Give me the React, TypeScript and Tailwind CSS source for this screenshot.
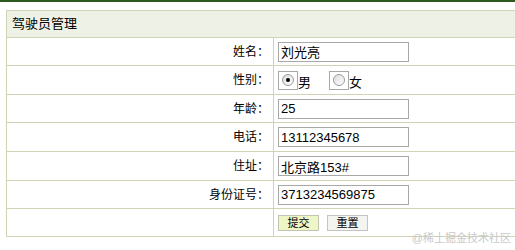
const rows = [
  { label: "姓名：", value: "刘光亮", h: "h-[28px]" },
  { label: "性别：", radio: true, h: "h-[29px]" },
  { label: "年龄：", value: "25", h: "h-[28px]" },
  { label: "电话：", value: "13112345678", h: "h-[29px]" },
  { label: "住址：", value: "北京路153#", h: "h-[29px]" },
  { label: "身份证号：", value: "3713234569875", h: "h-[28px]" },
];

function Radio({ checked, text }: { checked?: boolean; text: string }) {
  return (
    <span className="flex items-end">
      <span className="flex h-[19px] w-[20px] items-center justify-center border border-[#a8a8a8]">
        <span className="flex h-[12px] w-[12px] items-center justify-center rounded-full border border-[#9a9a9a] bg-gradient-to-br from-[#dcdcdc] to-white">
          {checked && <span className="h-[4px] w-[4px] rounded-full bg-black" />}
        </span>
      </span>
      <span className="text-[13px] leading-[14px] text-black">{text}</span>
    </span>
  );
}

export default function App() {
  return (
    <div className="relative h-[250px] w-[515px] overflow-hidden bg-white font-['Liberation_Sans','Noto_Sans_CJK_SC',sans-serif]">
      <div className="h-[2px] bg-[#2c5a1e]" />
      <div className="pl-[6px] pt-[8px]">
        <div className="w-[700px] border-l border-[#d0d3b4]">
          <div className="flex h-[28px] items-center border-y border-[#d0d3b4] bg-[#eef2e6] pl-[5px] text-[13px] text-black">
            驾驶员管理
          </div>
          {rows.map((r) => (
            <div key={r.label} className={`flex ${r.h} border-b border-[#d0d3b4]`}>
              <div className="flex w-[266px] items-center justify-end pr-[4px] text-[12px] text-black">
                {r.label}
              </div>
              <div className="flex flex-1 items-center border-l border-[#d0d3b4] pl-[4px]">
                {r.radio ? (
                  <div className="flex gap-[18px]">
                    <Radio checked text="男" />
                    <Radio text="女" />
                  </div>
                ) : (
                  <input
                    readOnly
                    value={r.value}
                    className="h-[20px] w-[131px] border border-[#a8a8a8] px-[2px] text-[13px] text-black outline-none"
                  />
                )}
              </div>
            </div>
          ))}
          <div className="flex h-[28px] border-b border-[#d0d3b4]">
            <div className="w-[266px]" />
            <div className="flex flex-1 items-center gap-[8px] border-l border-[#d0d3b4] pl-[4px]">
              <button className="h-[16px] w-[41px] border border-[#c4c4b4] bg-[#eef6c6] text-[11px] leading-[14px] text-black">
                提交
              </button>
              <button className="h-[16px] w-[41px] border border-[#c4c4c4] bg-[#f4f4f0] text-[11px] leading-[14px] text-black">
                重置
              </button>
            </div>
          </div>
        </div>
      </div>
      <div className="absolute bottom-[4px] right-[4px] text-[11px] text-[#c9c9c9]">@稀土掘金技术社区</div>
    </div>
  );
}
